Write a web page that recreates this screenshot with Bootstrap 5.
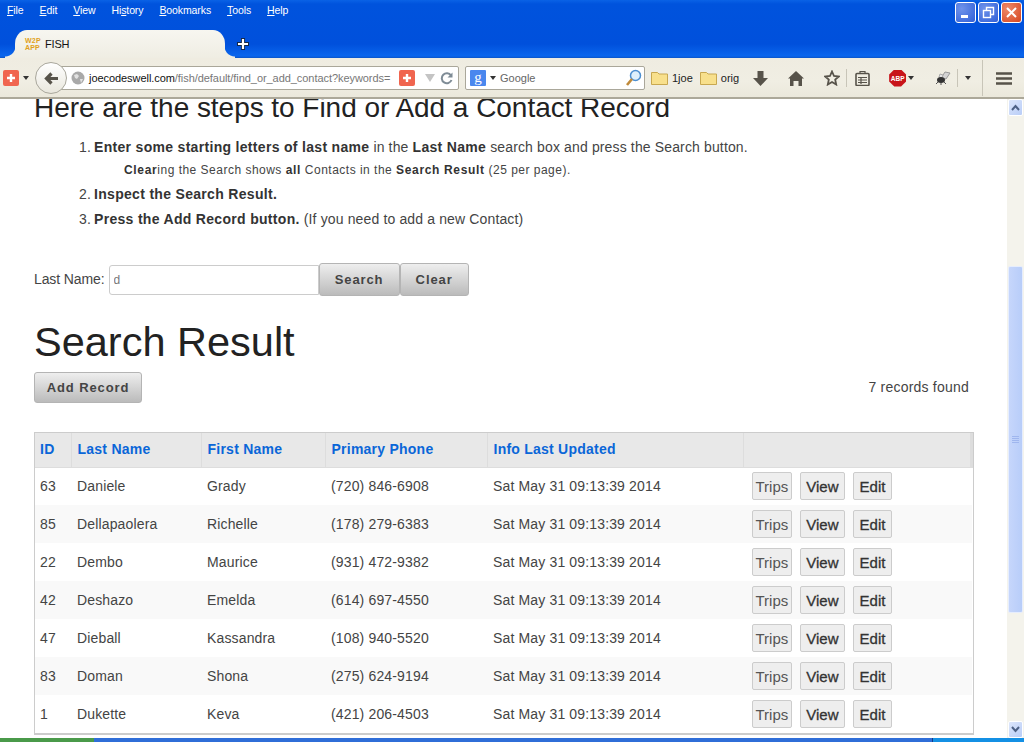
<!DOCTYPE html>
<html lang="en">

<head>
  <meta charset="UTF-8" />
  <meta name="viewport" content="width=device-width, initial-scale=1.0" />
  <title>FISH</title>
  <link href="https://cdn.jsdelivr.net/npm/bootstrap@5.3.0/dist/css/bootstrap.min.css" rel="stylesheet" />
  <style>
    html, body { height: 742px; overflow: hidden; }
    body { font-family: "Liberation Sans", Arial, sans-serif; font-size: 14px; color: #444; background: #fff; }

    /* Window title area */
    .win-top { height: 58px; position: relative; background: linear-gradient(#0a62e6 0, #0053dd 4px, #0050dc 44px, #0a66ee 56px, #0a55c8 58px); }
    .menu-row { height: 24px; padding: 3px 0 0 7px; gap: 16px; font-size: 10.5px; letter-spacing: -.1px; color: #fff; line-height: 15px; }
    .tab-row { height: 34px; padding: 6px 0 0 5px; align-items: flex-end; }
    .fx-tab { width: 210px; height: 28px; margin-left: 10px; position: relative; background: linear-gradient(#f7f6f0, #efede3); border-radius: 12px 12px 0 0 / 14px 14px 0 0; padding-left: 10px; gap: 5px; font-size: 11px; letter-spacing: -.2px; color: #111; }
    .fx-tab::before, .fx-tab::after { content: ""; position: absolute; bottom: 0; width: 10px; height: 12px; }
    .fx-tab::before { left: -10px; background: radial-gradient(circle at 0 0, transparent 10px, #efede3 11px); }
    .fx-tab::after { right: -10px; background: radial-gradient(circle at 100% 0, transparent 10px, #efede3 11px); }
    .tab-fav { width: 15px; font: 700 7px/7px "Liberation Sans", sans-serif; color: #e0a020; letter-spacing: .2px; }
    .tab-plus { margin: 0 0 8px 12px; }
    .win-btns { position: absolute; top: 2px; right: 2px; gap: 2px; }
    .win-btn { width: 21px; height: 21px; border: 1px solid #fff; border-radius: 3px; background: radial-gradient(circle at 30% 30%, #6f93ea, #2f5fd8); }
    .win-btn.win-close { background: radial-gradient(circle at 30% 30%, #ee8a6a, #d6451f); }

    /* Navigation toolbar */
    .fx-toolbar { height: 41px; padding: 1px 0 0 3px; background: linear-gradient(#efece1, #f0eee3 60%, #ebe8db); border-bottom: 2px solid #aca899; font-size: 11px; color: #222; }
    .fx-toolbar > * { flex-shrink: 0; }
    .addon-red { width: 16px; height: 16px; flex-shrink: 0; border-radius: 2px; background: #f0654f; }
    .tiny-caret { width: 0; height: 0; flex-shrink: 0; border-left: 3.5px solid transparent; border-right: 3.5px solid transparent; border-top: 4px solid #333; }
    .back-btn { width: 32px; height: 32px; margin: 0 -8px 0 6px; border-radius: 50%; background: linear-gradient(#fff, #e9e7dd); border: 1px solid #a9a79c; z-index: 2; position: relative; }
    .url-box { width: 401px; height: 24px; background: #fff; border: 1px solid #aaa79a; border-radius: 0 2px 2px 0; padding: 0 0 0 12px; margin-left: -1px; gap: 4px; }
    .url-box > * { flex-shrink: 0; }
    .url-text { font-size: 11px; letter-spacing: -.06px; white-space: nowrap; color: #777; width: 303px; margin-right: 3px; }
    .url-text b { font-weight: 400; color: #111; }
    .url-tri { margin-left: 6px; }
    .url-reload { margin-left: 1px; }
    .search-box { width: 180px; height: 24px; background: #fff; border: 1px solid #aaa79a; border-radius: 2px; margin-left: 6px; padding: 0 2px 0 4px; gap: 4px; color: #666; }
    .g-logo { width: 16px; height: 16px; background: #4a87ee; border-radius: 1px; color: #fff; font: 400 15px/14px "Liberation Serif", serif; text-align: center; }
    .bm-item { gap: 4px; margin-left: 6px; padding-right: 1px; }
    .bm-tools { margin-left: 2px; }
    .tool-slot { width: 36px; }
    .slot-clip { width: 30px; }
    .slot-menu { width: 42px; }
    .tool-sep { width: 1px; height: 18px; background: #c8c5b8; }
    .sep-star { margin-left: -4px; }
    .sep-tall { height: 36px; margin-left: 11px; }
    .abp-badge { width: 17px; height: 17px; margin-left: 12px; background: #c8141a; color: #fff; clip-path: polygon(30% 0, 70% 0, 100% 30%, 100% 70%, 70% 100%, 30% 100%, 0 70%, 0 30%); font: 700 6.500px/17px "Liberation Sans", sans-serif; text-align: center; }
    .abp-caret { margin-left: 2px; }
    .fly-icon { margin: 0 6px 0 21px; }
    .more-caret { margin-left: 7px; }

    /* Page body */
    .view-area { height: 639px; overflow: hidden; }
    .page-col { width: 1007px; padding: 0 33px 0 34px; overflow: hidden; }
    .steps-title { font-size: 28px; line-height: 30px; font-weight: 400; color: #222; letter-spacing: -.04px; margin: -6px 0 0; }
    .steps-list { margin: 12px 0 0; padding-left: 60px; letter-spacing: .14px; line-height: 25px; }
    .steps-list b { color: #333; letter-spacing: .31px; }
    .steps-list li::marker { content: counter(list-item) ".\2009 "; }
    .steps-note { font-size: 12px; padding-left: 30px; line-height: 20px; margin-bottom: 2px; letter-spacing: .49px; }
    .steps-note b { letter-spacing: .66px; }
    .search-line { margin-top: 31px; height: 33px; letter-spacing: -.1px; }
    .last-input { width: 210px; height: 30px; margin-left: 4px; padding: 0 4px; border: 1px solid #ccc; border-radius: 3px 0 0 3px; font-size: 12px; color: #777; }
    .grey-btn { height: 33px; background: linear-gradient(#eee, #bbb); border: 1px solid #b4b4b4; border-radius: 3px; font: 700 13px "Liberation Sans", sans-serif; letter-spacing: .9px; color: #444; padding: 0 15px; }
    .search-go { width: 81px; padding: 0; }
    .result-title { font-size: 41.500px; line-height: 46px; font-weight: 400; color: #222; margin: 23px 0 7px; }
    .found-line { height: 31px; margin-bottom: 29px; letter-spacing: .22px; }
    .found-count { margin-right: 5px; }
    .add-btn { height: 31px; width: 108px; padding: 0; }
    .grid-wrap { width: 940px; border: 1px solid #ccc; border-bottom-width: 2px; }
    .rec-table { width: 100%; table-layout: fixed; margin: 0; --bs-table-border-color: transparent; --bs-table-color: #444; font-size: 14px; letter-spacing: .15px; }
    .rec-table th { height: 34px; padding: 0 5px 0 6px; background: #e8e8e8; border-right: 1px solid #ddd; border-bottom: 1px solid #ddd; vertical-align: middle; letter-spacing: .24px; }
    .rec-table th:last-child { border-right: 3px solid #ddd; }
    .rec-table th a { color: #0a66d8; text-decoration: none; }
    .rec-table td { height: 38px; padding: 0 5px 0 6px; vertical-align: middle; border: 0; }
    .rec-table th:first-child, .rec-table td:first-child { padding-left: 5px; }
    .rec-table tbody tr:nth-child(even) td { background: #f9f9f9; }
    .mini-btn { height: 28px; padding: 0 2.500px; background: #eee; border: 1px solid #ccc; border-radius: 2px; font: 15px "Liberation Sans", sans-serif; letter-spacing: 0; color: #555; margin-right: 8px; }
    .mini-btn.strong { color: #333; -webkit-text-stroke: .3px #333; padding: 0 5.500px; }
    .rec-table td.act-cell { padding-left: 9px; white-space: nowrap; }

    /* Scrollbar */
    .v-scroll { width: 17px; background: #f4f3ec; padding: 0 0 0 1px; }
    .sb-arrow { height: 17px; width: 15px; background: linear-gradient(135deg, #dce6fb, #b9cdf7); border: 1px solid #fff; border-radius: 2px; }
    .sb-thumb { width: 15px; height: 347px; margin-top: 150px; background: linear-gradient(90deg, #c6d6fb, #b8cdf9); border: 1px solid #e6edfd; border-radius: 2px; }
    .sb-grip { width: 7px; height: 7px; background: repeating-linear-gradient(#9fb6ee 0 1px, transparent 1px 2px); }

    /* Taskbar strip at the bottom */
    .task-strip { height: 4px; background: #2f6ed8; }
    .task-start { width: 94px; background: #4a9a4a; }
    .task-tray { width: 92px; margin-left: auto; background: #1490e4; border-left: 1px solid #123a8a; }
  </style>
</head>

<body>
  <div class="win-top">
    <div class="menu-row d-flex">
      <span><u>F</u>ile</span><span><u>E</u>dit</span><span><u>V</u>iew</span><span>Hi<u>s</u>tory</span><span><u>B</u>ookmarks</span><span><u>T</u>ools</span><span><u>H</u>elp</span>
    </div>
    <div class="tab-row d-flex">
      <div class="fx-tab d-flex align-items-center">
        <span class="tab-fav">W2P<br>APP</span><span>FISH</span>
      </div>
      <svg class="tab-plus" width="12" height="12" viewBox="0 0 12 12"><path d="M6 0v12M0 6h12" stroke="#12284a" stroke-width="4"/><path d="M6 1v10M1 6h10" stroke="#fff" stroke-width="2.200"/></svg>
    </div>
    <div class="win-btns d-flex">
      <div class="win-btn d-flex align-items-center justify-content-center">
        <svg width="13" height="13" viewBox="0 0 13 13"><rect x="2" y="9" width="7" height="3" fill="#fff"/></svg>
      </div>
      <div class="win-btn d-flex align-items-center justify-content-center">
        <svg width="13" height="13" viewBox="0 0 13 13" fill="none" stroke="#fff"><rect x="1.500" y="4.500" width="7" height="7" stroke-width="1.400"/><path d="M4.500 4V1.500h7v7H9" stroke-width="1.400"/></svg>
      </div>
      <div class="win-btn win-close d-flex align-items-center justify-content-center">
        <svg width="13" height="13" viewBox="0 0 13 13"><path d="M2 2l9 9M11 2l-9 9" stroke="#fff" stroke-width="2"/></svg>
      </div>
    </div>
  </div>

  <div class="fx-toolbar d-flex align-items-center">
    <div class="addon-red d-flex align-items-center justify-content-center">
      <svg width="10" height="10" viewBox="0 0 10 10"><path d="M5 1v8M1 5h8" stroke="#fff" stroke-width="2.400"/></svg>
    </div>
    <span class="tiny-caret ms-1"></span>
    <div class="back-btn d-flex align-items-center justify-content-center">
      <svg width="14" height="13" viewBox="0 0 14 13"><path d="M7.500 1.500L2.500 6.500l5 5M3 6.500h11" fill="none" stroke="#57534a" stroke-width="3.200"/></svg>
    </div>
    <div class="url-box d-flex align-items-center">
      <svg width="14" height="14" viewBox="0 0 14 14"><circle cx="7" cy="7" r="6.500" fill="#a9a9a9"/><path d="M3 4l3-1 2 2-2 3-2-1zM9 8l3 0-2 4z" fill="#e2e2e2"/></svg>
      <span class="url-text"><b>joecodeswell.com</b>/fish/default/find_or_add_contact?keywords=</span>
      <div class="addon-red d-flex align-items-center justify-content-center">
        <svg width="10" height="10" viewBox="0 0 10 10"><path d="M5 1v8M1 5h8" stroke="#fff" stroke-width="2.400"/></svg>
      </div>
      <svg class="url-tri" width="10" height="8" viewBox="0 0 10 8"><path d="M0 0h10L5 8z" fill="#c4c4c4"/></svg>
      <svg class="url-reload" width="13" height="13" viewBox="0 0 13 13"><path d="M11 3.500A5 5 0 1 0 11.500 8" fill="none" stroke="#7f8c96" stroke-width="2"/><path d="M12.500 .5v5h-5z" fill="#7f8c96"/></svg>
    </div>
    <div class="search-box d-flex align-items-center">
      <div class="g-logo">g</div>
      <span class="tiny-caret"></span>
      <span class="flex-grow-1">Google</span>
      <svg width="17" height="18" viewBox="0 0 17 18"><circle cx="10.500" cy="6.500" r="5" fill="#dff0fb" stroke="#4d8fd0" stroke-width="1.500"/><path d="M7 10l-5 6" stroke="#c08a3a" stroke-width="2.600"/></svg>
    </div>
    <div class="bm-item d-flex align-items-center">
      <svg width="17" height="14" viewBox="0 0 17 14"><path d="M.5 13.500v-12h6l1.500 1.500h8.500v10.500z" fill="#f8e08c" stroke="#c8a850"/></svg><span>1joe</span>
    </div>
    <div class="bm-item d-flex align-items-center">
      <svg width="17" height="14" viewBox="0 0 17 14"><path d="M.5 13.500v-12h6l1.500 1.500h8.500v10.500z" fill="#f8e08c" stroke="#c8a850"/></svg><span>orig</span>
    </div>
    <div class="bm-tools d-flex align-items-center">
      <div class="tool-slot d-flex justify-content-center">
        <svg width="15" height="15" viewBox="0 0 15 15"><path d="M4.500 0h6v7H15l-7.500 8L0 7h4.500z" fill="#57534a"/></svg>
      </div>
      <div class="tool-slot d-flex justify-content-center">
        <svg width="16" height="15" viewBox="0 0 16 15"><path d="M8 0l8 7.500h-2V15h-3.500v-5h-5v5H2V7.500H0z" fill="#57534a"/></svg>
      </div>
      <div class="tool-slot d-flex justify-content-center">
        <svg width="16" height="16" viewBox="0 0 16 16"><path d="M8 1.500l2 4.500 4.800.5-3.600 3.200 1 4.800L8 12l-4.200 2.500 1-4.800L1.200 6.500 6 6z" fill="none" stroke="#57534a" stroke-width="1.800"/></svg>
      </div>
      <span class="tool-sep sep-star"></span>
      <div class="tool-slot slot-clip d-flex justify-content-center">
        <svg width="15" height="15" viewBox="0 0 15 15"><rect x="1" y="2.500" width="13" height="12" rx="1" fill="none" stroke="#57534a" stroke-width="1.600"/><path d="M5 3V.5h5V3M3 6.500h9M3 9h9M3 11.500h9M6 6v7" stroke="#57534a" stroke-width="1.200" fill="none"/></svg>
      </div>
      <div class="abp-badge">ABP</div>
      <span class="tiny-caret abp-caret"></span>
      <svg class="fly-icon" width="16" height="14" viewBox="0 0 16 14"><path d="M6 7l4-6 5 1-4 6z" fill="#d4d4d4" stroke="#999"/><path d="M4 6l1-3 3 1-1 3z" fill="#e4e4e4" stroke="#aaa"/><ellipse cx="6" cy="9" rx="4" ry="3" fill="#333"/><path d="M3 11l-2 2M6 12v2M9 11l2 2" stroke="#555"/></svg>
      <span class="tool-sep"></span>
      <span class="tiny-caret more-caret"></span>
      <span class="tool-sep sep-tall"></span>
      <div class="tool-slot slot-menu d-flex justify-content-center">
        <svg width="16" height="13" viewBox="0 0 16 13"><path d="M0 1.500h16M0 6.500h16M0 11.500h16" stroke="#57534a" stroke-width="2.600"/></svg>
      </div>
    </div>
  </div>

  <div class="view-area d-flex">
    <div class="page-col">
      <h3 class="steps-title">Here are the steps to Find or Add a Contact Record</h3>
      <ol class="steps-list">
        <li><b>Enter some starting letters of last name</b> in the <b>Last Name</b> search box and press the Search button.
          <div class="steps-note"><b>Clear</b>ing the Search shows <b>all</b> Contacts in the <b>Search Result</b> (25 per page).</div>
        </li>
        <li><b>Inspect the Search Result.</b></li>
        <li><b>Press the Add Record button.</b> (If you need to add a new Contact)</li>
      </ol>
      <form class="search-line d-flex align-items-center">
        <label for="lastName">Last Name:</label>
        <input id="lastName" class="last-input" type="text" value="d" />
        <button type="button" class="grey-btn search-go">Search</button>
        <button type="button" class="grey-btn">Clear</button>
      </form>
      <h1 class="result-title">Search Result</h1>
      <div class="found-line d-flex justify-content-between align-items-center">
        <button type="button" class="grey-btn add-btn">Add Record</button>
        <span class="found-count">7 records found</span>
      </div>
      <div class="grid-wrap">
        <table class="table rec-table">
          <colgroup><col width="36"><col width="130"><col width="124"><col width="162"><col width="256"><col></colgroup>
          <thead>
            <tr>
              <th><a href="#">ID</a></th><th><a href="#">Last Name</a></th><th><a href="#">First Name</a></th><th><a href="#">Primary Phone</a></th><th><a href="#">Info Last Updated</a></th><th></th>
            </tr>
          </thead>
          <tbody id="recRows"></tbody>
        </table>
      </div>
    </div>
    <div class="v-scroll d-flex flex-column">
      <div class="sb-arrow d-flex align-items-center justify-content-center">
        <svg width="9" height="7" viewBox="0 0 9 7"><path d="M1 6l3.500-4L8 6" fill="none" stroke="#4d6185" stroke-width="2"/></svg>
      </div>
      <div class="sb-thumb d-flex align-items-center justify-content-center"><span class="sb-grip"></span></div>
      <div class="sb-arrow mt-auto d-flex align-items-center justify-content-center">
        <svg width="9" height="7" viewBox="0 0 9 7"><path d="M1 1l3.500 4L8 1" fill="none" stroke="#4d6185" stroke-width="2"/></svg>
      </div>
    </div>
  </div>

  <div class="task-strip d-flex">
    <div class="task-start"></div>
    <div class="task-tray"></div>
  </div>

  <script src="https://cdn.jsdelivr.net/npm/bootstrap@5.3.0/dist/js/bootstrap.bundle.min.js"></script>
  <script>
    const records = [
      ["63", "Daniele", "Grady", "(720) 846-6908"],
      ["85", "Dellapaolera", "Richelle", "(178) 279-6383"],
      ["22", "Dembo", "Maurice", "(931) 472-9382"],
      ["42", "Deshazo", "Emelda", "(614) 697-4550"],
      ["47", "Dieball", "Kassandra", "(108) 940-5520"],
      ["83", "Doman", "Shona", "(275) 624-9194"],
      ["1", "Dukette", "Keva", "(421) 206-4503"]
    ];
    const rowsBody = document.getElementById("recRows");
    records.forEach(r => {
      const tr = document.createElement("tr");
      tr.innerHTML = r.map(v => "<td>" + v + "</td>").join("") +
        "<td>Sat May 31 09:13:39 2014</td>" +
        '<td class="act-cell"><button class="mini-btn">Trips</button><button class="mini-btn strong">View</button><button class="mini-btn strong">Edit</button></td>';
      rowsBody.appendChild(tr);
    });
  </script>
</body>

</html>
